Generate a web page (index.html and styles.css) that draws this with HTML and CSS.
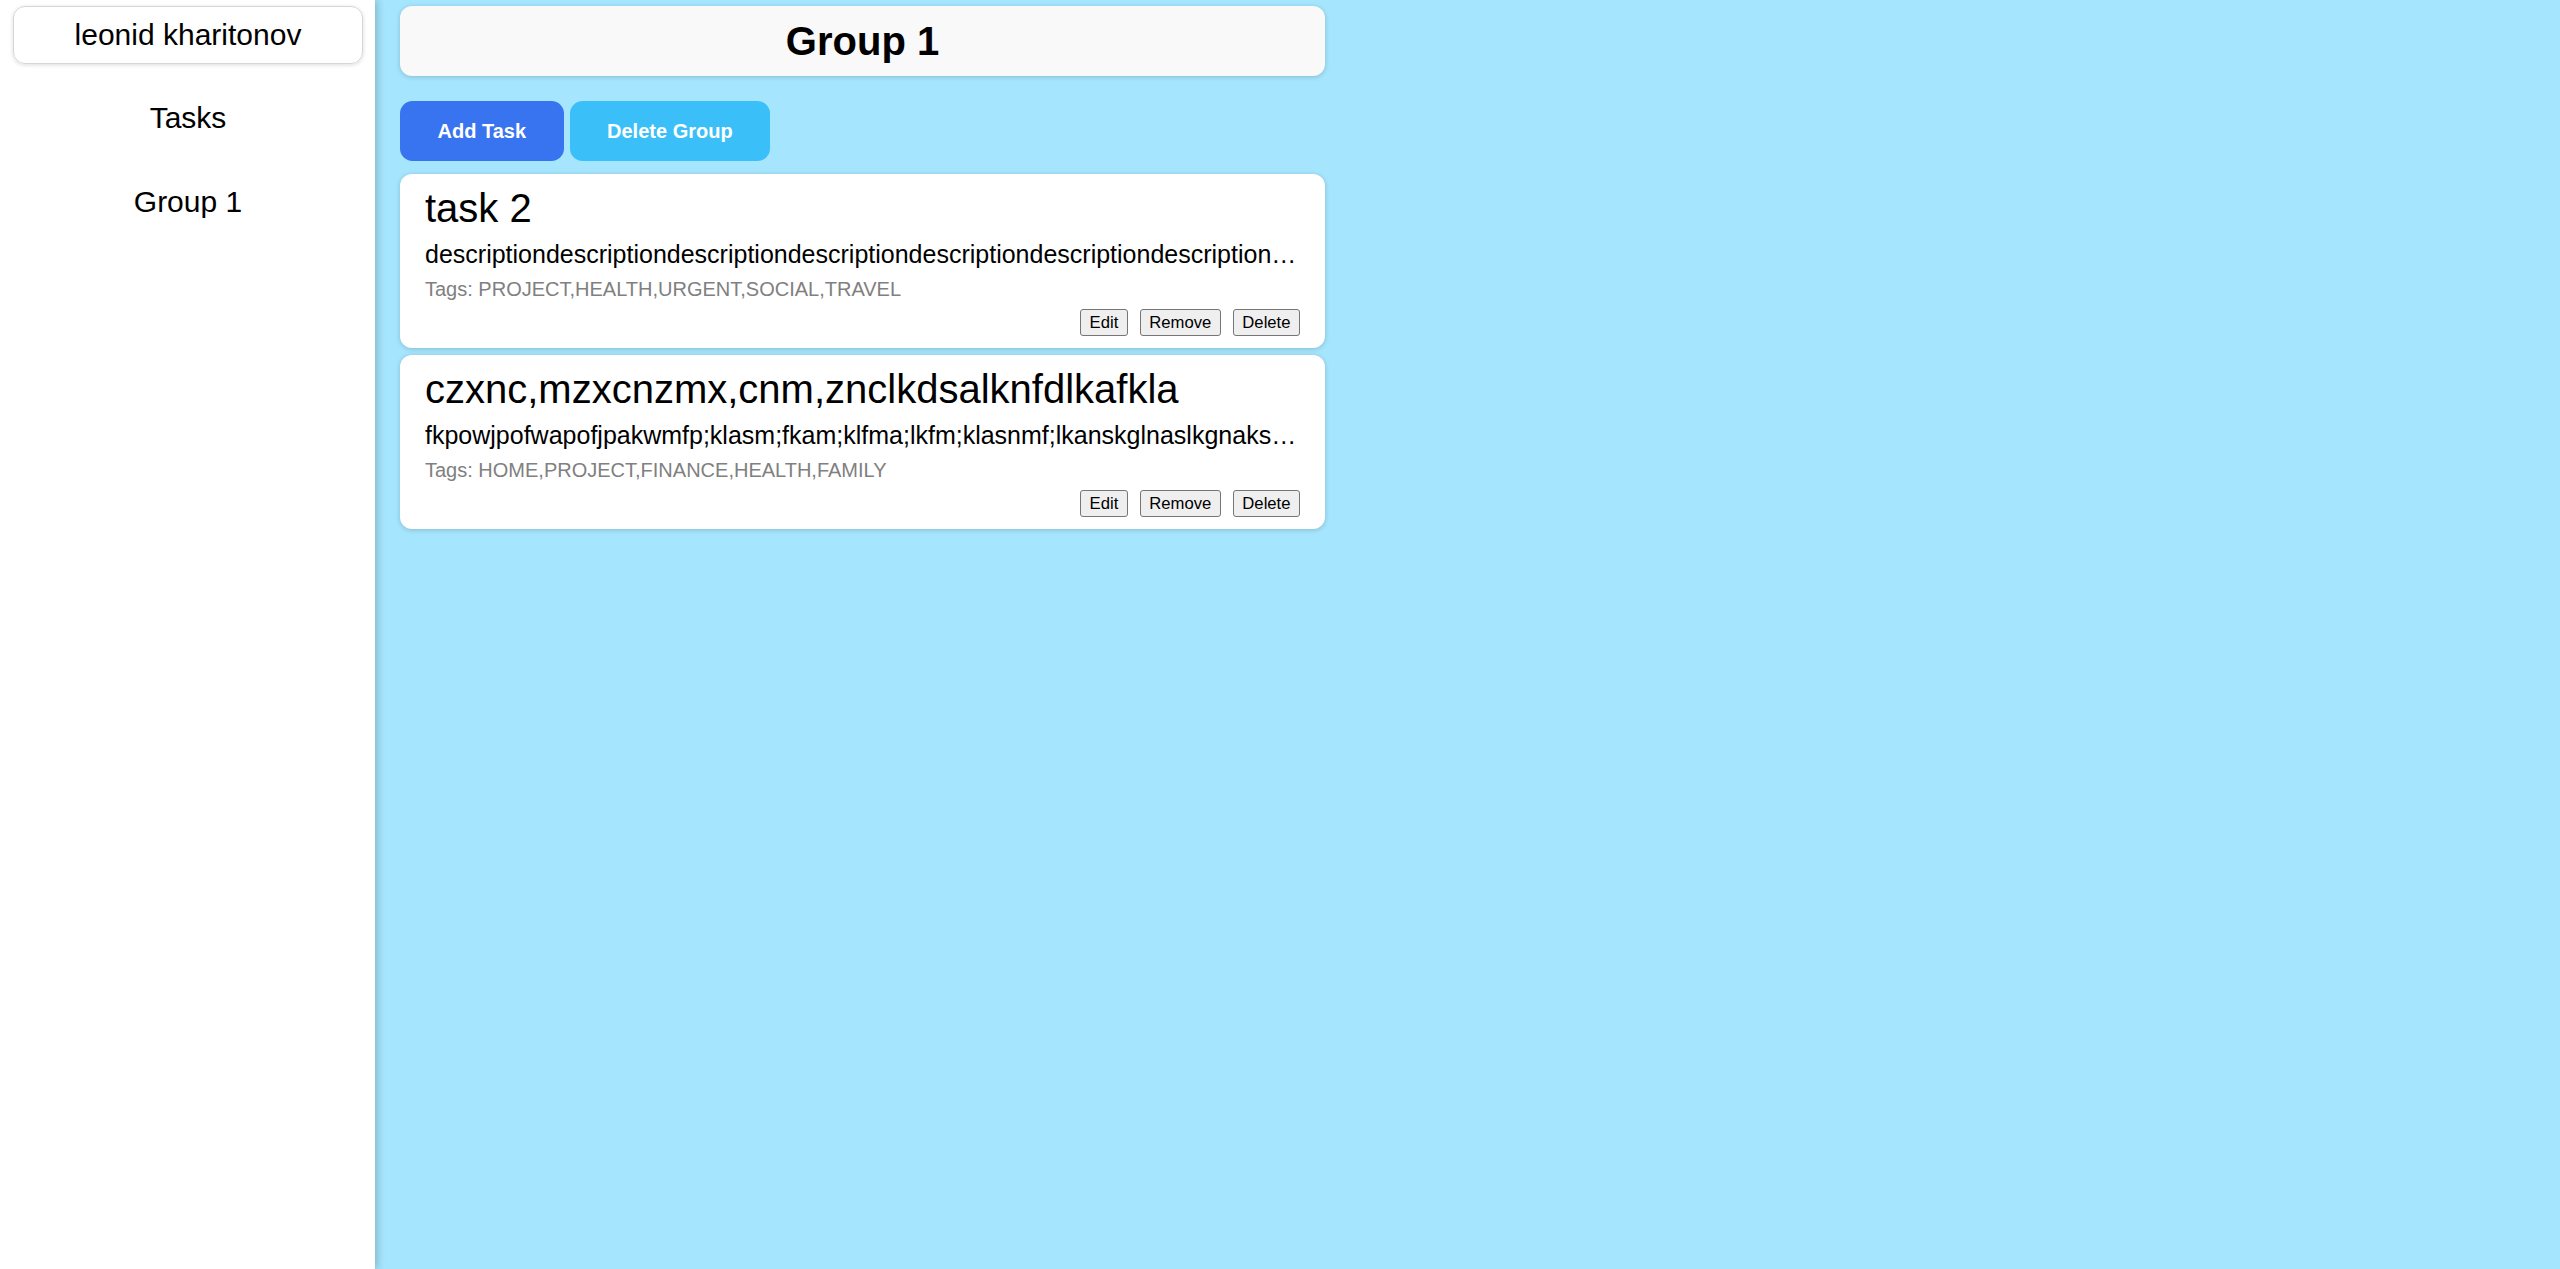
FILE: index.html
```html
<!DOCTYPE html>
<html lang="en">
<head>
<meta charset="utf-8">
<title>Group 1</title>
<link rel="stylesheet" href="styles.css">
</head>
<body>
<div class="app">
  <aside class="sidebar">
    <div class="profile">leonid kharitonov</div>
    <nav class="nav">
      <a class="nav-item">Tasks</a>
      <a class="nav-item">Group 1</a>
    </nav>
  </aside>
  <main class="main">
    <div class="content">
      <header class="group-header"><h1 class="group-title">Group 1</h1></header>
      <div class="actions">
        <button class="btn btn-add">Add Task</button>
        <button class="btn btn-delete">Delete Group</button>
      </div>
      <div class="task-list">
        <div class="task">
          <h2 class="task-title">task 2</h2>
          <p class="task-desc">descriptiondescriptiondescriptiondescriptiondescriptiondescriptiondescriptiondescriptiondescriptiondescriptiondescription</p>
          <p class="task-tags">Tags: PROJECT,HEALTH,URGENT,SOCIAL,TRAVEL</p>
          <div class="task-buttons">
            <button class="mini">Edit</button>
            <button class="mini">Remove</button>
            <button class="mini">Delete</button>
          </div>
        </div>
        <div class="task">
          <h2 class="task-title">czxnc,mzxcnzmx,cnm,znclkdsalknfdlkafkla</h2>
          <p class="task-desc">fkpowjpofwapofjpakwmfp;klasm;fkam;klfma;lkfm;klasnmf;lkanskglnaslkgnakslgnlaksngklasnglknaslkgn</p>
          <p class="task-tags">Tags: HOME,PROJECT,FINANCE,HEALTH,FAMILY</p>
          <div class="task-buttons">
            <button class="mini">Edit</button>
            <button class="mini">Remove</button>
            <button class="mini">Delete</button>
          </div>
        </div>
      </div>
    </div>
  </main>
</div>
</body>
</html>
```

FILE: styles.css
```css
html, body {
  margin: 0;
  padding: 0;
  height: 100%;
}

body {
  font-family: "Liberation Sans", Arial, sans-serif;
  color: #000;
}

.app {
  display: flex;
  min-height: 100vh;
}

.sidebar {
  width: 375px;
  flex: 0 0 375px;
  background: #ffffff;
  box-shadow: 2px 0 8px rgba(0, 0, 0, 0.22);
  position: relative;
  z-index: 1;
  padding: 6px 12px 0 13px;
  box-sizing: border-box;
}

.profile {
  border: 1.5px solid #d6d6d6;
  border-radius: 12px;
  box-shadow: 0 1px 4px rgba(0, 0, 0, 0.14);
  font-size: 30px;
  line-height: 34px;
  text-align: center;
  padding: 11px 0 11px;
}

.nav {
  display: flex;
  flex-direction: column;
  margin-top: 12px;
}

.nav-item {
  display: block;
  font-size: 30px;
  line-height: 34.5px;
  text-align: center;
  padding: 24.75px 0;
  color: #000;
  cursor: pointer;
}

.main {
  flex: 1;
  background: #a5e5fd;
  padding: 6px 25px;
}

.content {
  max-width: 925px;
  display: flex;
  flex-direction: column;
}

.group-header {
  background: #f9f9f9;
  border-radius: 12px;
  box-shadow: 0 1px 5px rgba(0, 0, 0, 0.18);
  padding: 12px 0;
  text-align: center;
}

.group-title {
  margin: 0;
  font-size: 40px;
  line-height: 46px;
  font-weight: bold;
}

.actions {
  display: flex;
  gap: 6px;
  margin-top: 25px;
}

.btn {
  font-family: "Liberation Sans", Arial, sans-serif;
  font-size: 20px;
  font-weight: bold;
  line-height: 23px;
  color: #ffffff;
  border: none;
  border-radius: 12.5px;
  padding: 18.5px 37.5px;
  cursor: pointer;
}

.btn-add {
  background: #3874ef;
}

.btn-delete {
  background: #3bbff8;
}

.task-list {
  display: flex;
  flex-direction: column;
  gap: 7px;
  margin-top: 13px;
}

.task {
  background: #ffffff;
  border-radius: 12px;
  box-shadow: 0 1px 5px rgba(0, 0, 0, 0.18);
  padding: 11px 25px 12px;
  display: flex;
  flex-direction: column;
}

.task-title {
  margin: 0 0 9px;
  font-size: 40px;
  line-height: 46px;
  font-weight: normal;
  white-space: nowrap;
  overflow: hidden;
  text-overflow: ellipsis;
}

.task-desc {
  margin: 0 0 9px;
  font-size: 25px;
  line-height: 29px;
  white-space: nowrap;
  overflow: hidden;
  text-overflow: ellipsis;
}

.task-tags {
  margin: 0 0 8px;
  font-size: 20px;
  line-height: 23px;
  color: #808080;
}

.task-buttons {
  display: flex;
  justify-content: flex-end;
  gap: 12px;
}

.mini {
  font-family: "Liberation Sans", Arial, sans-serif;
  font-size: 16.67px;
  height: 27px;
  padding: 0 8.5px;
  background: #efefef;
  border: 1px solid #767676;
  border-radius: 3px;
  color: #000;
  cursor: pointer;
}
```
